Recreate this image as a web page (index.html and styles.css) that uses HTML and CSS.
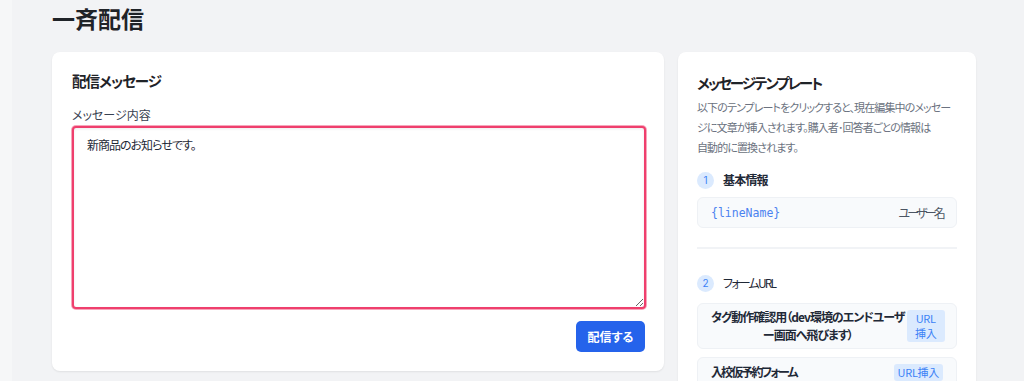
FILE: index.html
```html
<!DOCTYPE html>
<html lang="ja">
<head>
<meta charset="utf-8">
<title>一斉配信</title>
<link rel="stylesheet" href="styles.css">
</head>
<body>
<div class="app">
  <div class="edge"></div>
  <main class="main">
    <h1 class="page-title">一斉配信</h1>
    <div class="grid">
      <section class="card left">
        <h2 class="card-title">配信メッセージ</h2>
        <label class="field-label">メッセージ内容</label>
        <textarea class="message">新商品のお知らせです。</textarea>
        <div class="actions">
          <button class="btn-primary">配信する</button>
        </div>
      </section>
      <aside class="card right">
        <h2 class="card-title tight">メッセージテンプレート</h2>
        <p class="desc">以下のテンプレートをクリックすると、現在編集中のメッセー<br>ジに文章が挿入されます。購入者･回答者ごとの情報は<br>自動的に置換されます。</p>
        <div class="section-head">
          <span class="num">1</span><span class="sec-title bold">基本情報</span>
        </div>
        <div class="tpl">
          <span class="code">{lineName}</span>
          <span class="tpl-label">ユーザー名</span>
        </div>
        <hr class="divider">
        <div class="section-head second">
          <span class="num">2</span><span class="sec-title kana">フォームURL</span>
        </div>
        <div class="tpl form">
          <span class="form-name center">タグ動作確認用（dev環境のエンドユーザ<br>ー画面へ飛びます）</span>
          <span class="url-btn narrow">URL<br>挿入</span>
        </div>
        <div class="tpl form">
          <span class="form-name">入校仮予約フォーム</span>
          <span class="url-btn">URL挿入</span>
        </div>
      </aside>
    </div>
  </main>
</div>
</body>
</html>
```
FILE: styles.css
```css
* { box-sizing: border-box; }
html, body { margin: 0; padding: 0; }
body {
  background: #f2f3f5;
  font-family: "Noto Sans CJK JP", "Noto Sans", sans-serif;
  font-feature-settings: "palt";
  color: #1f2937;
  overflow: hidden;
  height: 381px;
}
.app { display: flex; }
.edge { width: 12px; flex: none; background: #f6f7f8; min-height: 381px; }
.main { padding: 0 0 0 40px; }
.page-title {
  margin: 0;
  padding-top: 3px;
  font-size: 23px;
  line-height: 30px;
  font-weight: 700;
  color: #1f2328;
}
.grid {
  margin-top: 19px;
  display: grid;
  grid-template-columns: 612px 298px;
  gap: 14px;
  align-items: start;
}
.card {
  background: #fff;
  border-radius: 8px;
  box-shadow: 0 1px 2px rgba(0,0,0,0.08);
}
.left { padding: 18px 19px 19px 20px; }
.right { padding: 20px 19px 0 19px; height: 340px; }
.card-title {
  margin: 0;
  font-size: 14.5px;
  line-height: 22px;
  font-weight: 700;
  color: #1f2328;
  letter-spacing: -1px;
}
.card-title.tight { letter-spacing: -2px; }
.field-label {
  display: block;
  margin-top: 15px;
  font-size: 12px;
  line-height: 16px;
  color: #374151;
}
.message {
  display: block;
  margin-top: 3px;
  width: 574px;
  height: 183px;
  border: 2px solid #ef3f6d;
  border-radius: 4px;
  box-shadow: 0 0 0 1px #f7a6bb, inset 0 1px 3px rgba(0,0,0,0.08);
  padding: 8px 13px;
  font-family: "Noto Sans CJK JP", "Noto Sans", sans-serif;
  font-feature-settings: "palt";
  font-size: 12px;
  line-height: 18px;
  letter-spacing: -1px;
  color: #1f2937;
  resize: vertical;
  outline: none;
}
.actions { display: flex; justify-content: flex-end; margin-top: 12px; }
.btn-primary {
  background: #2563eb;
  color: #fff;
  border: none;
  border-radius: 5px;
  width: 69px;
  height: 31px;
  font-family: "Noto Sans CJK JP", sans-serif;
  font-feature-settings: "palt";
  font-size: 12px;
  font-weight: 700;
  padding: 0;
}
.desc {
  margin: 3px 0 0;
  font-size: 11px;
  line-height: 20px;
  color: #6b7280;
  letter-spacing: -0.9px;
  white-space: nowrap;
}
.section-head {
  display: flex;
  align-items: center;
  gap: 9px;
  margin-top: 14px;
}
.section-head.second { margin-top: 25px; }
.num {
  width: 17px; height: 17px;
  border-radius: 50%;
  background: #dbeafe;
  color: #3b82f6;
  font-size: 10px;
  display: flex; align-items: center; justify-content: center;
  font-family: "Inter", "Noto Sans", sans-serif;
}
.sec-title { font-size: 12px; line-height: 18px; color: #1f2937; letter-spacing: -0.8px; }
.sec-title.bold { font-weight: 700; }
.sec-title.kana { letter-spacing: -1.8px; }
.tpl {
  margin-top: 8px;
  display: flex;
  align-items: center;
  justify-content: space-between;
  background: #f8fafc;
  border: 1px solid #eef1f5;
  border-radius: 6px;
  padding: 0 13px;
  height: 31px;
}
.code {
  font-family: "DejaVu Sans Mono", "Liberation Mono", monospace;
  font-size: 11.5px;
  color: #4b82f0;
}
.tpl-label { font-size: 12px; color: #4b5563; letter-spacing: -2.8px; }
.divider {
  border: none;
  border-top: 2px solid #f1f3f6;
  margin: 19px 0 0;
}
.tpl.form { height: auto; padding: 4px 13px; margin-top: 11px; gap: 2px; }
.tpl.form + .tpl.form { margin-top: 8px; padding: 5px 13px; }
.form-name {
  font-size: 12px;
  line-height: 18px;
  font-weight: 700;
  color: #1f2937;
  flex: 1;
  letter-spacing: -1.9px;
  white-space: nowrap;
}
.form-name.center { text-align: center; letter-spacing: -1px; }
.url-btn {
  background: #dbeafe;
  color: #3b82f6;
  font-size: 11px;
  line-height: 15px;
  border-radius: 3px;
  padding: 1px 4px;
  text-align: center;
  flex: none;
  letter-spacing: -0.3px;
}
.url-btn.narrow { width: 38px; padding: 1px 0; }
```
